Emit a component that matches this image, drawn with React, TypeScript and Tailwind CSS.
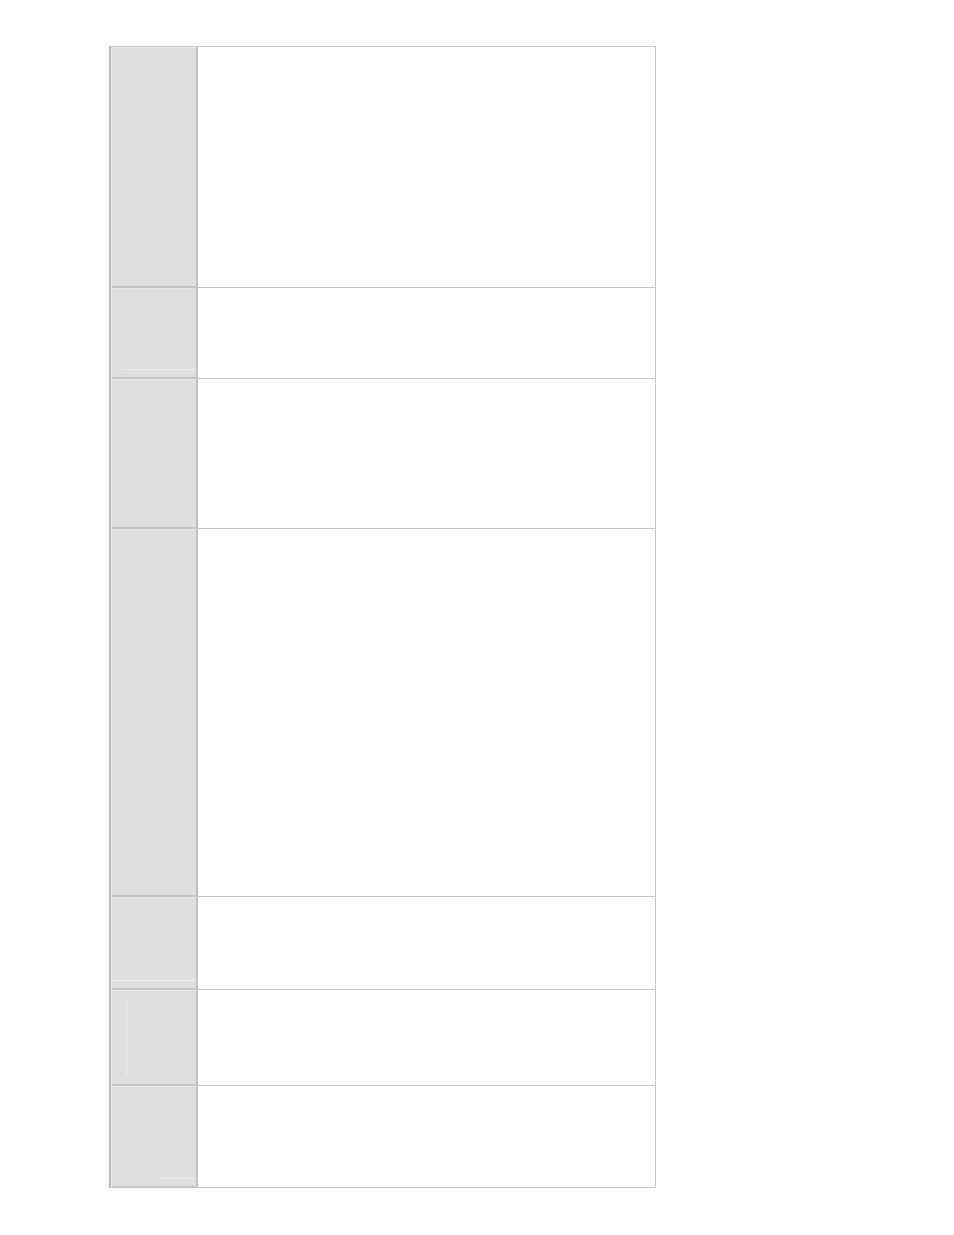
import React from 'react';

type Mark = { kind: 'h' | 'v'; className: string };

interface Row {
  height: string;
  marks: Mark[];
}

const rows: Row[] = [
  { height: 'h-[240px]', marks: [] },
  { height: 'h-[90px]', marks: [{ kind: 'h', className: 'left-[11px] right-0 bottom-[8px]' }] },
  { height: 'h-[149px]', marks: [] },
  { height: 'h-[367px]', marks: [] },
  { height: 'h-[92px]', marks: [{ kind: 'h', className: 'left-[1px] right-0 bottom-[8px]' }] },
  { height: 'h-[95px]', marks: [{ kind: 'v', className: 'left-[15px] top-[9px] h-[77px]' }] },
  { height: 'h-[101px]', marks: [{ kind: 'h', className: 'left-[48px] right-0 bottom-[8px]' }] },
];

function TableRow({ row }: { row: Row }) {
  return (
    <div className="flex border-b border-[#c6c6c6]">
      <div className={`relative w-[89px] shrink-0 ${row.height} bg-[#dedede] border-l-2 border-r-2 border-[#c0c0c0] shadow-[inset_1px_1px_0_#e6e6e6,inset_0_-1px_0_#c4c4c4]`}>
        {row.marks.map((m, i) => (
          <div
            key={i}
            className={`absolute bg-[#ebebeb] ${m.kind === 'h' ? 'h-px' : 'w-px'} ${m.className}`}
          />
        ))}
      </div>
      <div className={`flex-1 ${row.height} bg-white border-r border-[#c6c6c6]`} />
    </div>
  );
}

export default function App() {
  return (
    <div className="min-h-[1235px] bg-white pt-[46px] pl-[109px] font-['Liberation_Sans',sans-serif]">
      <div className="w-[547px] border-t border-[#c6c6c6]">
        {rows.map((row, i) => (
          <TableRow key={i} row={row} />
        ))}
      </div>
    </div>
  );
}
